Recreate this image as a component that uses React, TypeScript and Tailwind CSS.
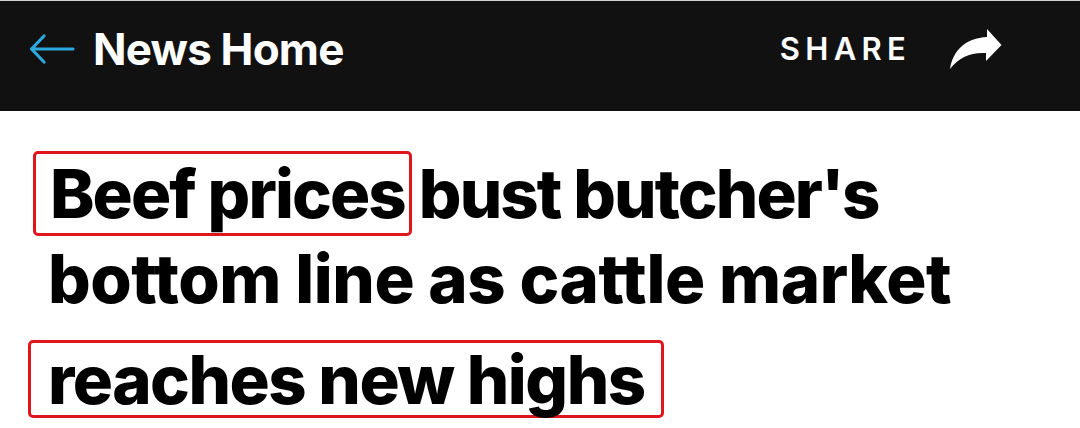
export default function App() {
  return (
    <main className="w-[1080px] h-[428px] overflow-hidden bg-white font-['Inter','Liberation_Sans',sans-serif]">
      {/* top bar */}
      <header className="h-[111px] bg-[#111111] border-t border-[#d0d0d0] flex items-center justify-between pb-[14px] pl-[29px] pr-[78px]">
        <div className="flex items-center gap-[18px]">
          <svg width="46" height="32" viewBox="0 0 46 32" fill="none">
            <path d="M44 16H3M15 3L2.5 16L15 29" stroke="#2ba8dd" strokeWidth="3.2" strokeLinecap="round" strokeLinejoin="round" />
          </svg>
          <span className="text-white text-[44px] font-bold tracking-[-0.8px]">News Home</span>
        </div>
        <div className="flex items-center gap-[38px]">
          <span className="text-white text-[31px] font-semibold tracking-[0.17em]">SHARE</span>
          <svg width="53" height="41" viewBox="0 0 53 41">
            <path d="M1 40 C 4 21, 17 9, 38 8 L 38 0 L 52.5 16 L 37 32 L 37 24 C 22 23, 10 28, 1 40 Z" fill="#ffffff" />
          </svg>
        </div>
      </header>

      {/* headline */}
      <h1 className="pl-[33px] pt-[40px] text-black text-[67px] font-extrabold leading-none">
        <div className="flex items-center h-[85px] tracking-[-1.9px]">
          <span className="h-[85px] flex items-center border-[3px] border-[#e0161e] rounded-[5px] pl-[14px] pr-[4px]">Beef prices</span>
          <span className="ml-[7px]">bust butcher's</span>
        </div>
        <div className="flex items-center h-[104px] pb-[20px] pl-[15px] tracking-[-0.45px]">bottom line as cattle market</div>
        <div className="flex items-center h-[78px] -ml-[5px] tracking-[-1.5px]">
          <span className="h-[78px] flex items-center border-[3px] border-[#e0161e] rounded-[5px] pl-[17px] pr-[16px]">reaches new highs</span>
        </div>
      </h1>
    </main>
  );
}
